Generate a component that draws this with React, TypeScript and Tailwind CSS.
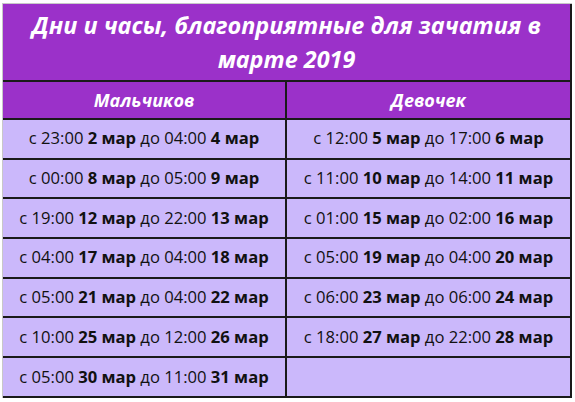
const rows: [string, string, string, string][] = [
  ["23:00", "2", "04:00", "4"],
  ["00:00", "8", "05:00", "9"],
  ["19:00", "12", "22:00", "13"],
  ["04:00", "17", "04:00", "18"],
  ["05:00", "21", "04:00", "22"],
  ["10:00", "25", "12:00", "26"],
  ["05:00", "30", "11:00", "31"],
]

const girls: ([string, string, string, string] | null)[] = [
  ["12:00", "5", "17:00", "6"],
  ["11:00", "10", "14:00", "11"],
  ["01:00", "15", "02:00", "16"],
  ["05:00", "19", "04:00", "20"],
  ["06:00", "23", "06:00", "24"],
  ["18:00", "27", "22:00", "28"],
  null,
]

function Range({ r }: { r: [string, string, string, string] | null }) {
  if (!r) return null
  return (
    <span>
      с {r[0]} <b>{r[1]} мар</b> до {r[2]} <b>{r[3]} мар</b>
    </span>
  )
}

export default function App() {
  return (
    <div className="w-[575px] h-[402px] bg-white pt-[3px] pl-[2px]" style={{ fontFamily: "'Open Sans', sans-serif" }}>
      <div className="w-[570px] border-l border-t border-[#c8c8c8]">
        <div className="h-[76px] bg-[#9b31c9] border-r-2 border-[#1a1a1a] flex flex-col items-center justify-center text-white italic font-bold text-[23.4px] leading-[34px]">
          <div>Дни и часы, благоприятные для зачатия в</div>
          <div>марте 2019</div>
        </div>
        <div className="grid grid-cols-[284px_1fr] bg-[#9b31c9] border-y-2 border-r-2 border-[#1a1a1a] h-[40px] text-white italic font-bold text-[18px]">
          <div className="flex items-center justify-center border-r-2 border-[#1a1a1a]">Мальчиков</div>
          <div className="flex items-center justify-center">Девочек</div>
        </div>
        {rows.map((r, i) => (
          <div key={i} className="grid grid-cols-[284px_1fr] bg-[#cbb8fb] border-b-2 border-r-2 border-[#1a1a1a] h-[39.7px] text-[#111] text-[16.6px]">
            <div className="flex items-center justify-center border-r-2 border-[#1a1a1a]">
              <Range r={r} />
            </div>
            <div className="flex items-center justify-center">
              <Range r={girls[i]} />
            </div>
          </div>
        ))}
      </div>
    </div>
  )
}
